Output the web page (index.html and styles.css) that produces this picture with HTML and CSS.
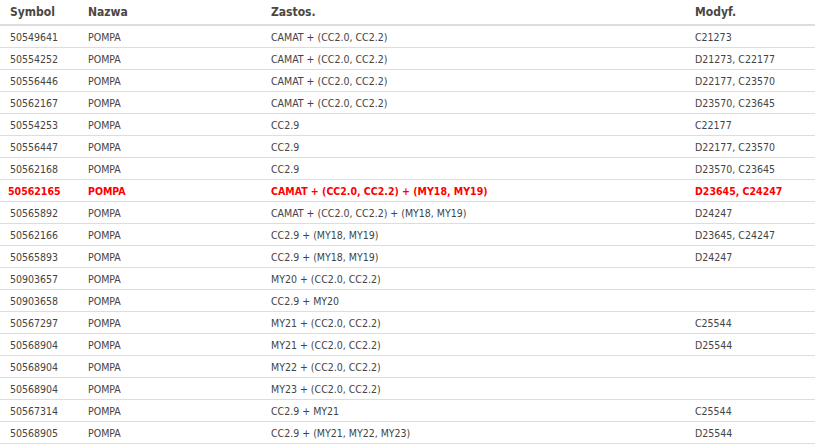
FILE: index.html
```html
<!DOCTYPE html>
<html lang="pl">
<head>
<meta charset="utf-8">
<title>Tabela</title>
<link rel="stylesheet" href="styles.css">
</head>
<body>
<table class="parts">
  <colgroup>
    <col class="c-sym"><col class="c-name"><col class="c-use"><col class="c-mod">
  </colgroup>
  <thead>
    <tr><th class="sym">Symbol</th><th>Nazwa</th><th>Zastos.</th><th>Modyf.</th></tr>
  </thead>
  <tbody>
    <tr><td class="sym">50549641</td><td>POMPA</td><td>CAMAT + (CC2.0, CC2.2)</td><td>C21273</td></tr>
    <tr><td class="sym">50554252</td><td>POMPA</td><td>CAMAT + (CC2.0, CC2.2)</td><td>D21273, C22177</td></tr>
    <tr><td class="sym">50556446</td><td>POMPA</td><td>CAMAT + (CC2.0, CC2.2)</td><td>D22177, C23570</td></tr>
    <tr><td class="sym">50562167</td><td>POMPA</td><td>CAMAT + (CC2.0, CC2.2)</td><td>D23570, C23645</td></tr>
    <tr><td class="sym">50554253</td><td>POMPA</td><td>CC2.9</td><td>C22177</td></tr>
    <tr><td class="sym">50556447</td><td>POMPA</td><td>CC2.9</td><td>D22177, C23570</td></tr>
    <tr><td class="sym">50562168</td><td>POMPA</td><td>CC2.9</td><td>D23570, C23645</td></tr>
    <tr class="current"><td class="sym">50562165</td><td>POMPA</td><td>CAMAT + (CC2.0, CC2.2) + (MY18, MY19)</td><td>D23645, C24247</td></tr>
    <tr><td class="sym">50565892</td><td>POMPA</td><td>CAMAT + (CC2.0, CC2.2) + (MY18, MY19)</td><td>D24247</td></tr>
    <tr><td class="sym">50562166</td><td>POMPA</td><td>CC2.9 + (MY18, MY19)</td><td>D23645, C24247</td></tr>
    <tr><td class="sym">50565893</td><td>POMPA</td><td>CC2.9 + (MY18, MY19)</td><td>D24247</td></tr>
    <tr><td class="sym">50903657</td><td>POMPA</td><td>MY20 + (CC2.0, CC2.2)</td><td></td></tr>
    <tr><td class="sym">50903658</td><td>POMPA</td><td>CC2.9 + MY20</td><td></td></tr>
    <tr><td class="sym">50567297</td><td>POMPA</td><td>MY21 + (CC2.0, CC2.2)</td><td>C25544</td></tr>
    <tr><td class="sym">50568904</td><td>POMPA</td><td>MY21 + (CC2.0, CC2.2)</td><td>D25544</td></tr>
    <tr><td class="sym">50568904</td><td>POMPA</td><td>MY22 + (CC2.0, CC2.2)</td><td></td></tr>
    <tr><td class="sym">50568904</td><td>POMPA</td><td>MY23 + (CC2.0, CC2.2)</td><td></td></tr>
    <tr><td class="sym">50567314</td><td>POMPA</td><td>CC2.9 + MY21</td><td>C25544</td></tr>
    <tr><td class="sym">50568905</td><td>POMPA</td><td>CC2.9 + (MY21, MY22, MY23)</td><td>D25544</td></tr>
  </tbody>
</table>
</body>
</html>
```

FILE: styles.css
```css
html, body {
  margin: 0;
  padding: 0;
  background: #fff;
}

.parts {
  width: 815px;
  table-layout: fixed;
  border-collapse: separate;
  border-spacing: 0;
  font-family: "DejaVu Sans Condensed", "DejaVu Sans", sans-serif;
  font-size: 10.5px;
  color: #444;
}

.c-sym { width: 80px; }
.c-name { width: 183px; }
.c-use { width: 424px; }
.c-mod { width: 128px; }

.parts th {
  height: 24px;
  padding: 0 8px;
  text-align: left;
  vertical-align: middle;
  font-size: 12px;
  font-weight: bold;
  color: #4a4642;
  border-bottom: 2px solid #ddd;
  white-space: nowrap;
}

.parts th.sym {
  padding-left: 10px;
}

.parts td {
  height: 21px;
  padding: 0 8px;
  vertical-align: middle;
  border-bottom: 1px solid #ddd;
  white-space: nowrap;
}

.parts td.sym {
  text-align: right;
  padding-right: 22px;
}

.parts tbody tr:last-child td {
  border-bottom: 1px solid #ddd;
  box-shadow: 0 2px 0 #eee;
}

.parts tr.current td {
  color: #f00;
  font-weight: bold;
}
```
